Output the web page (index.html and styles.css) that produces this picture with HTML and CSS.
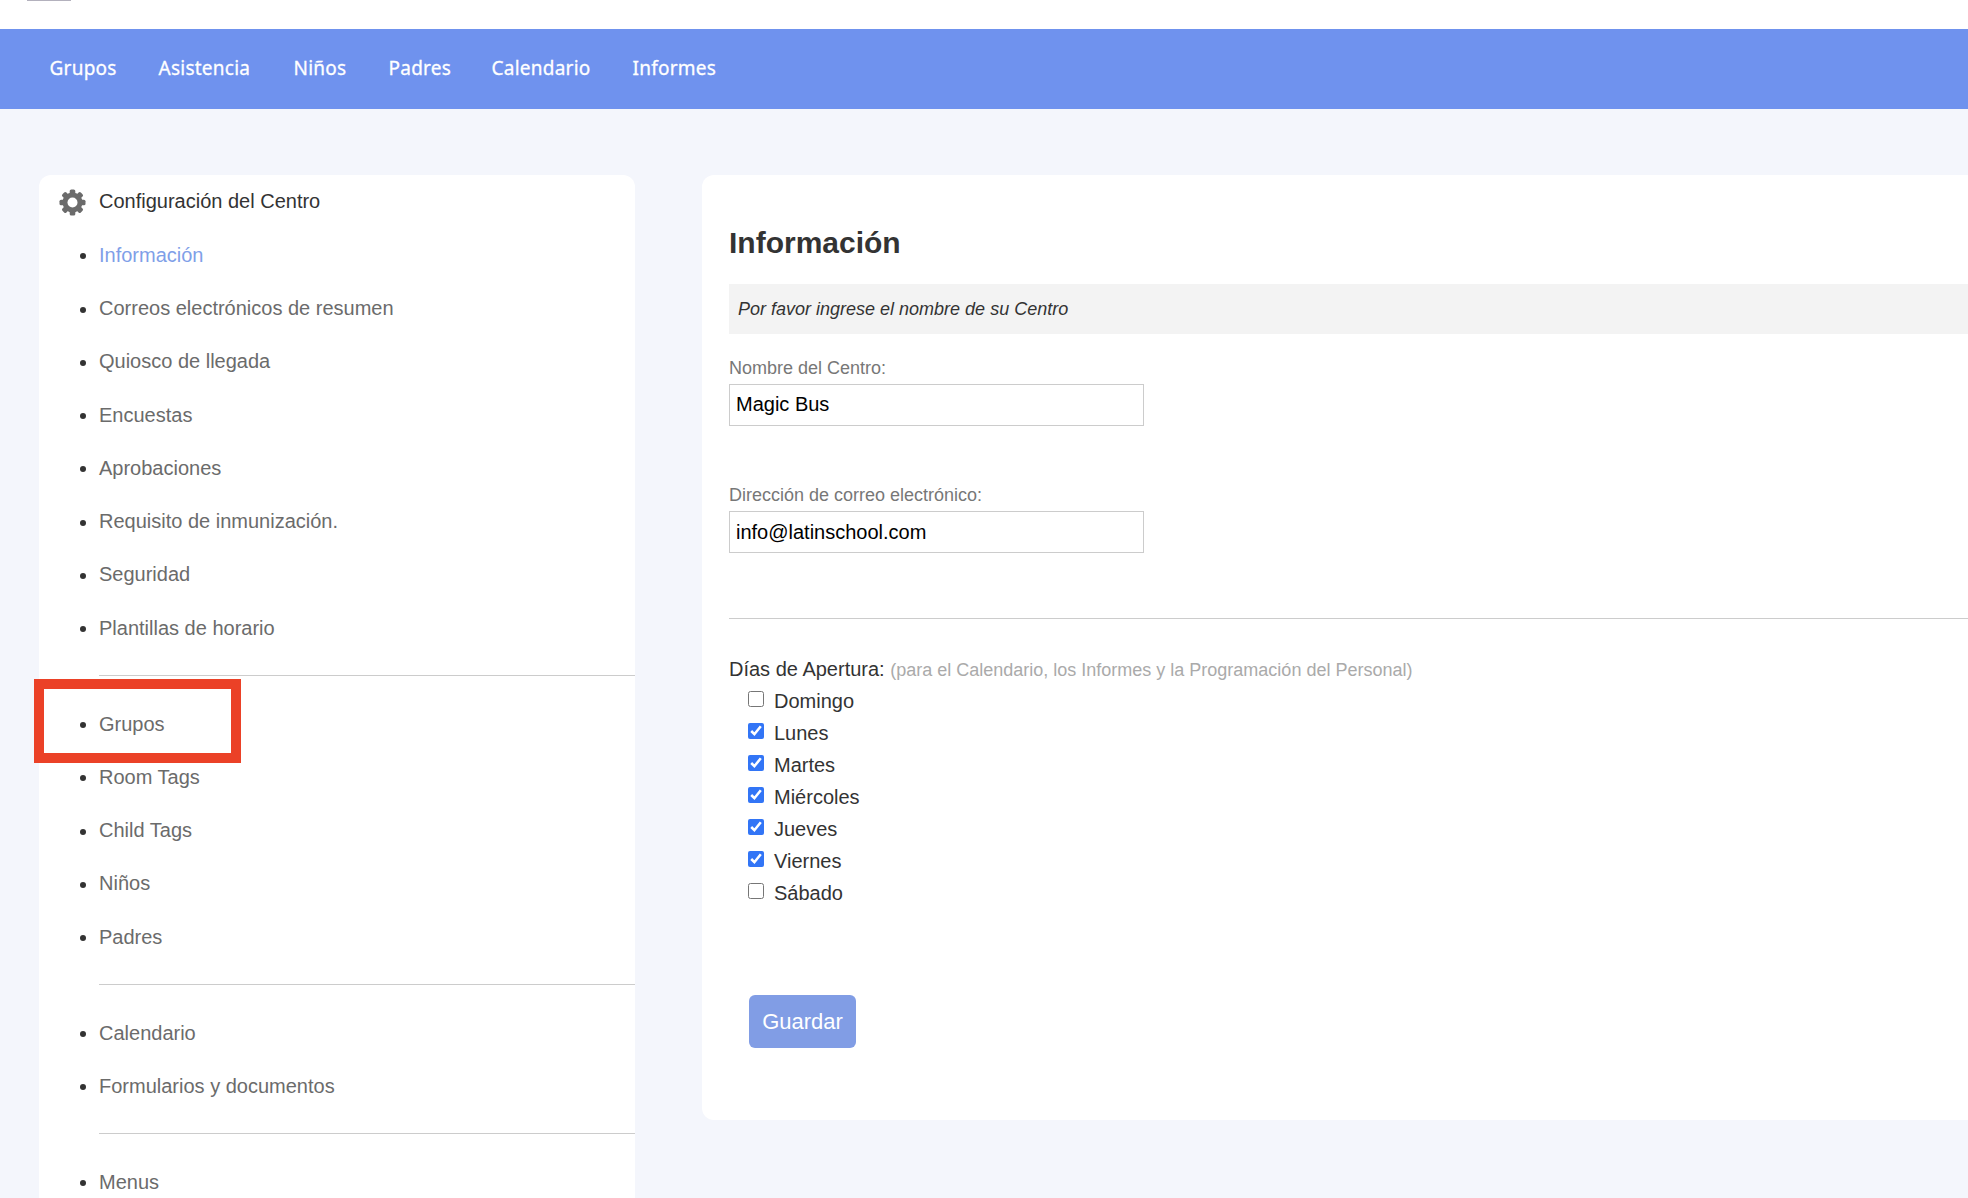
FILE: index.html
```html
<!DOCTYPE html>
<html lang="es">
<head>
<meta charset="UTF-8" />
<title>Configuración del Centro</title>
<link rel="stylesheet" href="styles.css">
</head>
<body>
<header class="top"><div class="menu-mark"></div></header>
<nav class="navbar">
  <a>Grupos</a>
  <a>Asistencia</a>
  <a>Niños</a>
  <a>Padres</a>
  <a>Calendario</a>
  <a>Informes</a>
</nav>

<div class="page">
<aside class="sidebar">
  <div class="sidebar-title">
    <svg class="gear" viewBox="0 0 27 27" width="27" height="27">
      <g fill="#6b6b6b">
        <rect x="10.7" y="0.5" width="5.6" height="26" rx="1.6"/>
        <rect x="10.7" y="0.5" width="5.6" height="26" rx="1.6" transform="rotate(45 13.5 13.5)"/>
        <rect x="10.7" y="0.5" width="5.6" height="26" rx="1.6" transform="rotate(90 13.5 13.5)"/>
        <rect x="10.7" y="0.5" width="5.6" height="26" rx="1.6" transform="rotate(135 13.5 13.5)"/>
        <circle cx="13.5" cy="13.5" r="10"/>
      </g>
      <circle cx="13.5" cy="13.5" r="5" fill="#fff"/>
    </svg>
    <span>Configuración del Centro</span>
  </div>
  <ul class="menu">
    <li class="active">Información</li>
    <li>Correos electrónicos de resumen</li>
    <li>Quiosco de llegada</li>
    <li>Encuestas</li>
    <li>Aprobaciones</li>
    <li>Requisito de inmunización.</li>
    <li>Seguridad</li>
    <li>Plantillas de horario</li>
  </ul>
  <hr>
  <ul class="menu">
    <li class="marked">Grupos</li>
    <li>Room Tags</li>
    <li>Child Tags</li>
    <li>Niños</li>
    <li>Padres</li>
  </ul>
  <hr>
  <ul class="menu">
    <li>Calendario</li>
    <li>Formularios y documentos</li>
  </ul>
  <hr>
  <ul class="menu">
    <li>Menus</li>
  </ul>
</aside>

<main class="content">
  <h1>Información</h1>
  <div class="notice">Por favor ingrese el nombre de su Centro</div>
  <form id="centerForm">
    <div class="field">
      <label for="name">Nombre del Centro:</label>
      <input type="text" id="name" value="Magic Bus">
    </div>
    <div class="field">
      <label for="email">Dirección de correo electrónico:</label>
      <input type="text" id="email" value="info@latinschool.com">
    </div>
    <hr>
    <div class="days-title">Días de Apertura: <span>(para el Calendario, los Informes y la Programación del Personal)</span></div>
    <div class="days">
      <label><input type="checkbox">Domingo</label>
      <label><input type="checkbox" checked>Lunes</label>
      <label><input type="checkbox" checked>Martes</label>
      <label><input type="checkbox" checked>Miércoles</label>
      <label><input type="checkbox" checked>Jueves</label>
      <label><input type="checkbox" checked>Viernes</label>
      <label><input type="checkbox">Sábado</label>
    </div>
    <button type="button" class="save">Guardar</button>
  </form>
</main>
</div>
</body>
</html>
```
FILE: styles.css
```css
*,
*::before,
*::after {
  box-sizing: border-box;
}
body {
  margin: 0;
  height: 1198px;
  overflow: hidden;
  font-family: "Liberation Sans", Arial, sans-serif;
  font-size: 20px;
  background-color: #f4f6fc;
  color: #333;
}
.top {
  height: 29px;
  background-color: #fff;
  padding-left: 27px;
}
.menu-mark {
  width: 44px;
  height: 1px;
  background-color: #b3b1bd;
}
.navbar {
  height: 80px;
  background-color: #6f92ee;
  display: grid;
  grid-template-columns: 109px 135px 95px 103px 141px auto;
  padding-left: 49.5px;
  line-height: 79px;
  font-family: "Noto Sans", sans-serif;
  font-size: 19px;
  letter-spacing: 0.25px;
  -webkit-text-stroke: 0.3px #fff;
  color: #fff;
}
.page {
  display: flex;
  align-items: flex-start;
  gap: 67px;
  padding: 66px 0 0 39px;
}
.sidebar {
  width: 596px;
  height: 1023px;
  flex-shrink: 0;
  background-color: #fff;
  border-radius: 12px 12px 0 0;
  line-height: 53.25px;
}
.sidebar-title {
  display: flex;
  align-items: center;
  height: 53.75px;
  padding-left: 20px;
  gap: 13px;
}
.gear {
  margin-top: 2px;
}
.menu {
  list-style: none;
  margin: 0;
  padding: 0;
}
.menu li {
  position: relative;
  padding-left: 60px;
  height: 53.25px;
  color: #6b6b6b;
}
.menu li::before {
  content: "";
  position: absolute;
  left: 41px;
  top: 24.5px;
  width: 6px;
  height: 6px;
  border-radius: 50%;
  background-color: #333;
}
.menu li.active {
  color: #7f9fe8;
}
/* highlight box drawn over the list */
.menu li.marked::after {
  content: "";
  position: absolute;
  left: -5px;
  top: -19px;
  width: 207px;
  height: 84px;
  border: 10px solid #eb4127;
}
hr {
  border: 0;
  height: 1px;
  background-color: #ccc;
}
.sidebar hr {
  margin: 19.75px 0 22px 60px;
}
.content {
  flex: 1;
  height: 945px;
  background-color: #fff;
  border-radius: 12px 0 0 12px;
  padding: 50px 0 0 27px;
}
h1 {
  margin: 0 0 23px;
  font-size: 30px;
  line-height: 36px;
}
.notice {
  height: 50px;
  line-height: 50px;
  padding-left: 9px;
  background-color: #f3f3f3;
  font-size: 18px;
  font-style: italic;
}
.field {
  margin-top: 21px;
  height: 106px;
}
.notice + form .field:first-child {
  margin-top: 20px;
}
.field label {
  display: block;
  height: 30px;
  line-height: 28px;
  font-size: 18px;
  color: #777;
}
.field input {
  display: block;
  width: 415px;
  height: 42px;
  border: 1px solid #ccc;
  padding: 0 6px;
  font: inherit;
  color: #000;
}
#name {
  padding-bottom: 1px;
}
.content hr {
  margin: 31px 0 34px;
}
.days-title {
  height: 32px;
  line-height: 32px;
}
.days-title span {
  font-size: 18px;
  color: #aaa;
}
.days {
  padding-left: 19px;
}
.days label {
  display: flex;
  height: 32px;
  line-height: 32px;
}
.days input {
  width: 16px;
  height: 16px;
  margin: 6px 10px 0 0;
  accent-color: #3275f6;
}
.save {
  display: block;
  margin: 86px 0 0 20px;
  width: 107px;
  height: 53px;
  padding: 0;
  border: 0;
  border-radius: 6px;
  background-color: #819de5;
  color: #fff;
  font-family: inherit;
  font-size: 22px;
}
```
